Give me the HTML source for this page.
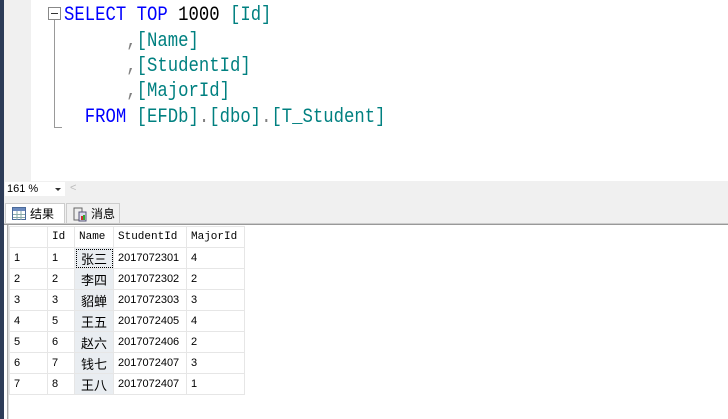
<!DOCTYPE html>
<html><head><meta charset="utf-8"><style>
*{margin:0;padding:0;box-sizing:border-box}
body{width:728px;height:419px;overflow:hidden;background:#fff;position:relative;font-family:"Liberation Sans","Noto Sans CJK SC",sans-serif}
.strip{position:absolute;left:0;top:0;width:4px;height:419px;background:#2d3c58}
.gutter{position:absolute;left:4px;top:0;width:27px;height:181px;background:#f0f0f0}
.code{position:absolute;left:64px;font-family:"Liberation Mono",monospace;font-size:17.3px;line-height:20px;white-space:pre;color:#008080;transform:scaleY(1.15);transform-origin:0 0}
.k{color:#0000ff}.b{color:#000}.g{color:#808080}
.fold{position:absolute;left:48px;top:7px;width:13px;height:13px;border:1px solid #888;background:#fff}
.fold:after{content:"";position:absolute;left:2px;top:5px;width:7px;height:1px;background:#333}
.vl{position:absolute;left:54px;top:20px;width:1px;height:108px;background:#999}
.hl{position:absolute;left:54px;top:127px;width:8px;height:1px;background:#999}
.bar{position:absolute;left:4px;top:181px;width:724px;height:44px;background:#f0f0f0}
.zoom{position:absolute;left:5px;top:182px;width:60px;height:14px;background:#fff;font-size:11px;line-height:14px;padding-left:2px;color:#000}
.zoom:after{content:"";position:absolute;right:4px;top:6px;border-left:3px solid transparent;border-right:3px solid transparent;border-top:3px solid #333}
.lt{position:absolute;left:70px;top:182px;font-size:11px;color:#bbb}
.tab{position:absolute;top:203px;height:22px;font-size:12px;line-height:20px;color:#000}
.t1{left:5px;width:60px;background:#fff;border:1px solid #ccc;border-bottom:none;padding-left:24px}
.t2{left:66px;width:54px;background:#f0f0f0;border:1px solid #ccc;padding-left:24px}
.sep{position:absolute;left:4px;top:223px;width:724px;height:2px;border-top:1px solid #ccc;border-bottom:1px solid #999}
.lb{position:absolute;left:7px;top:225px;width:2px;height:194px;border-left:1px solid #aaa;border-right:1px solid #ddd}
table{position:absolute;left:9px;top:226px;border-collapse:collapse;font-size:11px}
td{border:1px solid #e6e6e6;height:21px;padding:0 0 0 4px;color:#000;white-space:nowrap}
tr.h td{font-family:"Liberation Mono",monospace;font-size:11px;height:21px}
td.n{background:#e9edf1;font-size:13px;text-align:center;padding:0}
td.sel{outline:1px dotted #000;outline-offset:-2px}
</style></head><body>
<div class="strip"></div>
<div class="gutter"></div>
<div class="fold"></div><div class="vl"></div><div class="hl"></div>
<div class="code" style="top:5px"><span class="k">SELECT TOP</span> <span class="b">1000</span> [Id]</div>
<div class="code" style="top:31px">      <span class="g">,</span>[Name]</div>
<div class="code" style="top:56px">      <span class="g">,</span>[StudentId]</div>
<div class="code" style="top:81px">      <span class="g">,</span>[MajorId]</div>
<div class="code" style="top:107px">  <span class="k">FROM</span> [EFDb]<span class="g">.</span>[dbo]<span class="g">.</span>[T_Student]</div>
<div class="bar"></div>
<div class="zoom">161 %</div>
<div class="lt">&lt;</div>
<div class="tab t1"><svg style="position:absolute;left:6px;top:3px" width="14" height="13"><rect x="0.5" y="0.5" width="13" height="12" fill="#fff" stroke="#4a6a9a"/><rect x="1" y="1" width="12" height="3" fill="#6a8abf"/><path d="M1 7.5H13M1 10.5H13M5 4V13M9 4V13" stroke="#8aa" /></svg>结果</div>
<div class="tab t2"><svg style="position:absolute;left:6px;top:3px" width="14" height="15"><rect x="1" y="1" width="8" height="12" fill="#eee" stroke="#666"/><rect x="6" y="5" width="7" height="9" fill="#dde" stroke="#557"/><rect x="8" y="9" width="2" height="4" fill="#c33"/><rect x="10" y="8" width="2" height="5" fill="#3a3"/></svg>消息</div>
<div class="sep"></div>
<div class="lb"></div>
<table>
<tr class="h"><td style="width:38px"></td><td style="width:27px">Id</td><td style="width:39px">Name</td><td style="width:73px">StudentId</td><td style="width:58px">MajorId</td></tr>
<tr><td>1</td><td>1</td><td class="n sel">张三</td><td>2017072301</td><td>4</td></tr>
<tr><td>2</td><td>2</td><td class="n">李四</td><td>2017072302</td><td>2</td></tr>
<tr><td>3</td><td>3</td><td class="n">貂蝉</td><td>2017072303</td><td>3</td></tr>
<tr><td>4</td><td>5</td><td class="n">王五</td><td>2017072405</td><td>4</td></tr>
<tr><td>5</td><td>6</td><td class="n">赵六</td><td>2017072406</td><td>2</td></tr>
<tr><td>6</td><td>7</td><td class="n">钱七</td><td>2017072407</td><td>3</td></tr>
<tr><td>7</td><td>8</td><td class="n">王八</td><td>2017072407</td><td>1</td></tr>
</table>
</body></html>
